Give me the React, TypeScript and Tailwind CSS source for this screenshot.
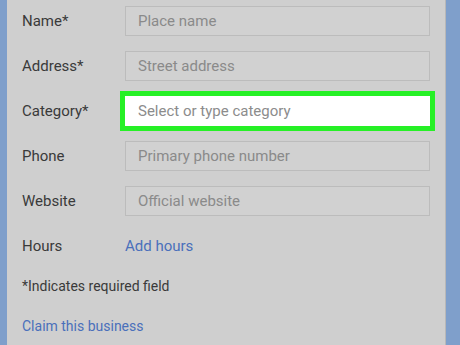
const fields = [
  { label: "Name*", placeholder: "Place name" },
  { label: "Address*", placeholder: "Street address" },
  { label: "Category*", placeholder: "Select or type category", focus: true },
  { label: "Phone", placeholder: "Primary phone number" },
  { label: "Website", placeholder: "Official website" },
];

export default function App() {
  return (
    <div className="flex h-[345px] w-[460px] overflow-hidden bg-[#cfcfcf] font-['Roboto',sans-serif]">
      <div className="w-[7px] shrink-0 bg-[#7f9fcb]" />
      <div className="flex flex-1 flex-col pl-[15px] pt-[6px]">
        {fields.map((f) => (
          <div key={f.label} className="mb-[15px] flex h-[30px] items-center">
            <div className="w-[103px] text-[15px] text-[#3a3a3a]">{f.label}</div>
            {f.focus ? (
              <div className="flex h-[30px] w-[305px] items-center bg-white pl-[13px] text-[15px] text-[#8c8c8c] outline-[5px] outline-solid outline-[#26f026]">
                {f.placeholder}
              </div>
            ) : (
              <div className="flex h-[30px] w-[305px] items-center border border-[#bcbcbc] bg-[#d1d1d1] pl-[12px] text-[15px] text-[#8a8a8a]">
                {f.placeholder}
              </div>
            )}
          </div>
        ))}
        <div className="flex h-[30px] items-center">
          <div className="w-[103px] text-[15px] text-[#3a3a3a]">Hours</div>
          <div className="text-[15px] text-[#4a6fbb]">Add hours</div>
        </div>
        <div className="mt-[15px] text-[14px] text-[#3a3a3a]">*Indicates required field</div>
        <div className="mt-[19px] text-[14px] text-[#4a6fbb]">Claim this business</div>
      </div>
      <div className="w-[15px] shrink-0 border-l border-[#b8b8b8] bg-[#7f9fcb]" />
    </div>
  );
}
